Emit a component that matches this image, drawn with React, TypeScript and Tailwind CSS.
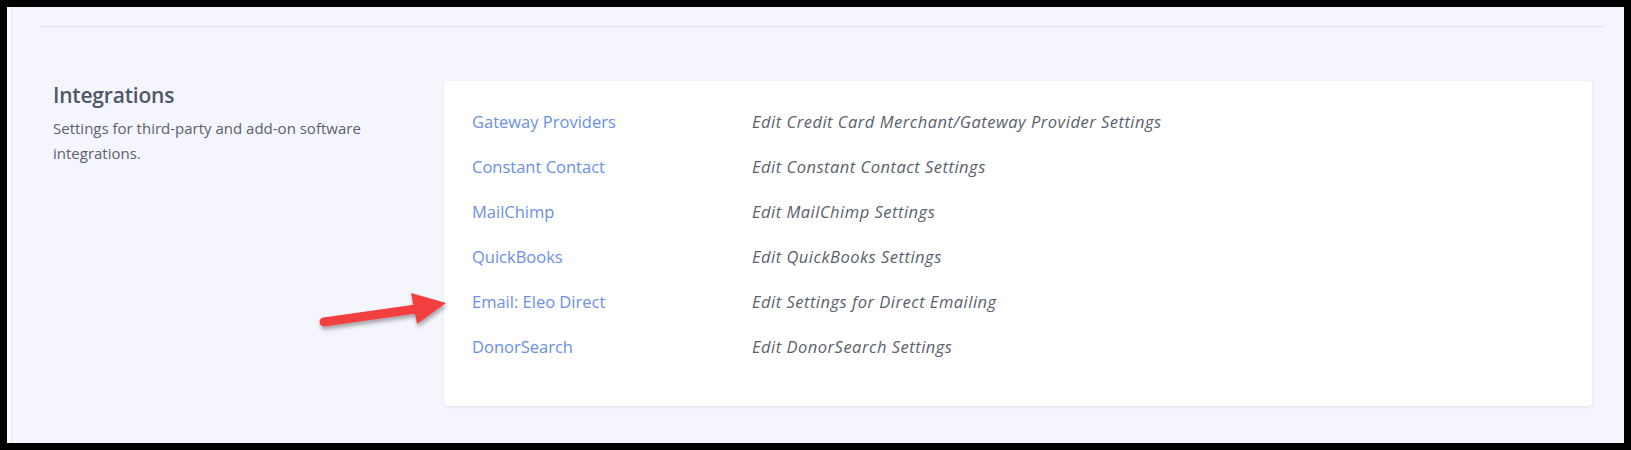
import React from 'react'

const rows = [
  { name: 'Gateway Providers', desc: 'Edit Credit Card Merchant/Gateway Provider Settings' },
  { name: 'Constant Contact', desc: 'Edit Constant Contact Settings' },
  { name: 'MailChimp', desc: 'Edit MailChimp Settings' },
  { name: 'QuickBooks', desc: 'Edit QuickBooks Settings' },
  { name: 'Email: Eleo Direct', desc: 'Edit Settings for Direct Emailing' },
  { name: 'DonorSearch', desc: 'Edit DonorSearch Settings' },
]

function Arrow() {
  return (
    <svg className="pointer-events-none absolute left-[282px] top-[266px]" width="170" height="75" viewBox="-7 -7 170 75">
      <defs>
        <filter id="arrowShadow" x="-20%" y="-40%" width="140%" height="180%">
          <feDropShadow dx="1" dy="3" stdDeviation="2" floodColor="#000" floodOpacity="0.35" />
        </filter>
      </defs>
      <g filter="url(#arrowShadow)" fill="#f23f3f">
        <line x1="24" y1="42" x2="116" y2="29" stroke="#f23f3f" strokeWidth="9" strokeLinecap="round" />
        <polygon points="111,13 146,23 117,44 114,29" />
      </g>
    </svg>
  )
}

export default function App() {
  return (
    <div className="h-[450px] w-[1631px] bg-black p-[7px]" style={{ fontFamily: '"Open Sans", sans-serif' }}>
      <div className="relative flex h-full border-l-4 border-[#fbfbff] bg-[#f5f6fd]">
        <div className="w-px bg-[#e4e5ed]" />
        <div className="flex flex-1 flex-col">
          <div className="ml-[27px] mr-[19px] mt-[19px] h-px bg-[#e2e3eb]" />
          <div className="mt-[54px] flex pr-[32px]">
            <div className="w-[432px] shrink-0 pl-[41px] pr-[70px]">
              <h2 className="text-[21px] font-semibold leading-[28px] tracking-[-0.2px] text-[#4f5768]">Integrations</h2>
              <p className="mt-[7px] text-[15px] leading-[25px] text-[#5b6070]">
                Settings for third-party and add-on software integrations.
              </p>
            </div>
            <div className="flex-1 rounded-[4px] bg-white pb-[36px] pl-[28px] pt-[19px] shadow-[0_1px_3px_rgba(60,64,90,0.12)]">
              {rows.map((r) => (
                <div key={r.name} className="flex h-[45px] items-center text-[16.5px]">
                  <a href="#" className="w-[280px] shrink-0 text-[#6a8fe8]">{r.name}</a>
                  <span className="italic tracking-[0.5px] text-[#5a5f6d]">{r.desc}</span>
                </div>
              ))}
            </div>
          </div>
        </div>
        <Arrow />
      </div>
    </div>
  )
}
